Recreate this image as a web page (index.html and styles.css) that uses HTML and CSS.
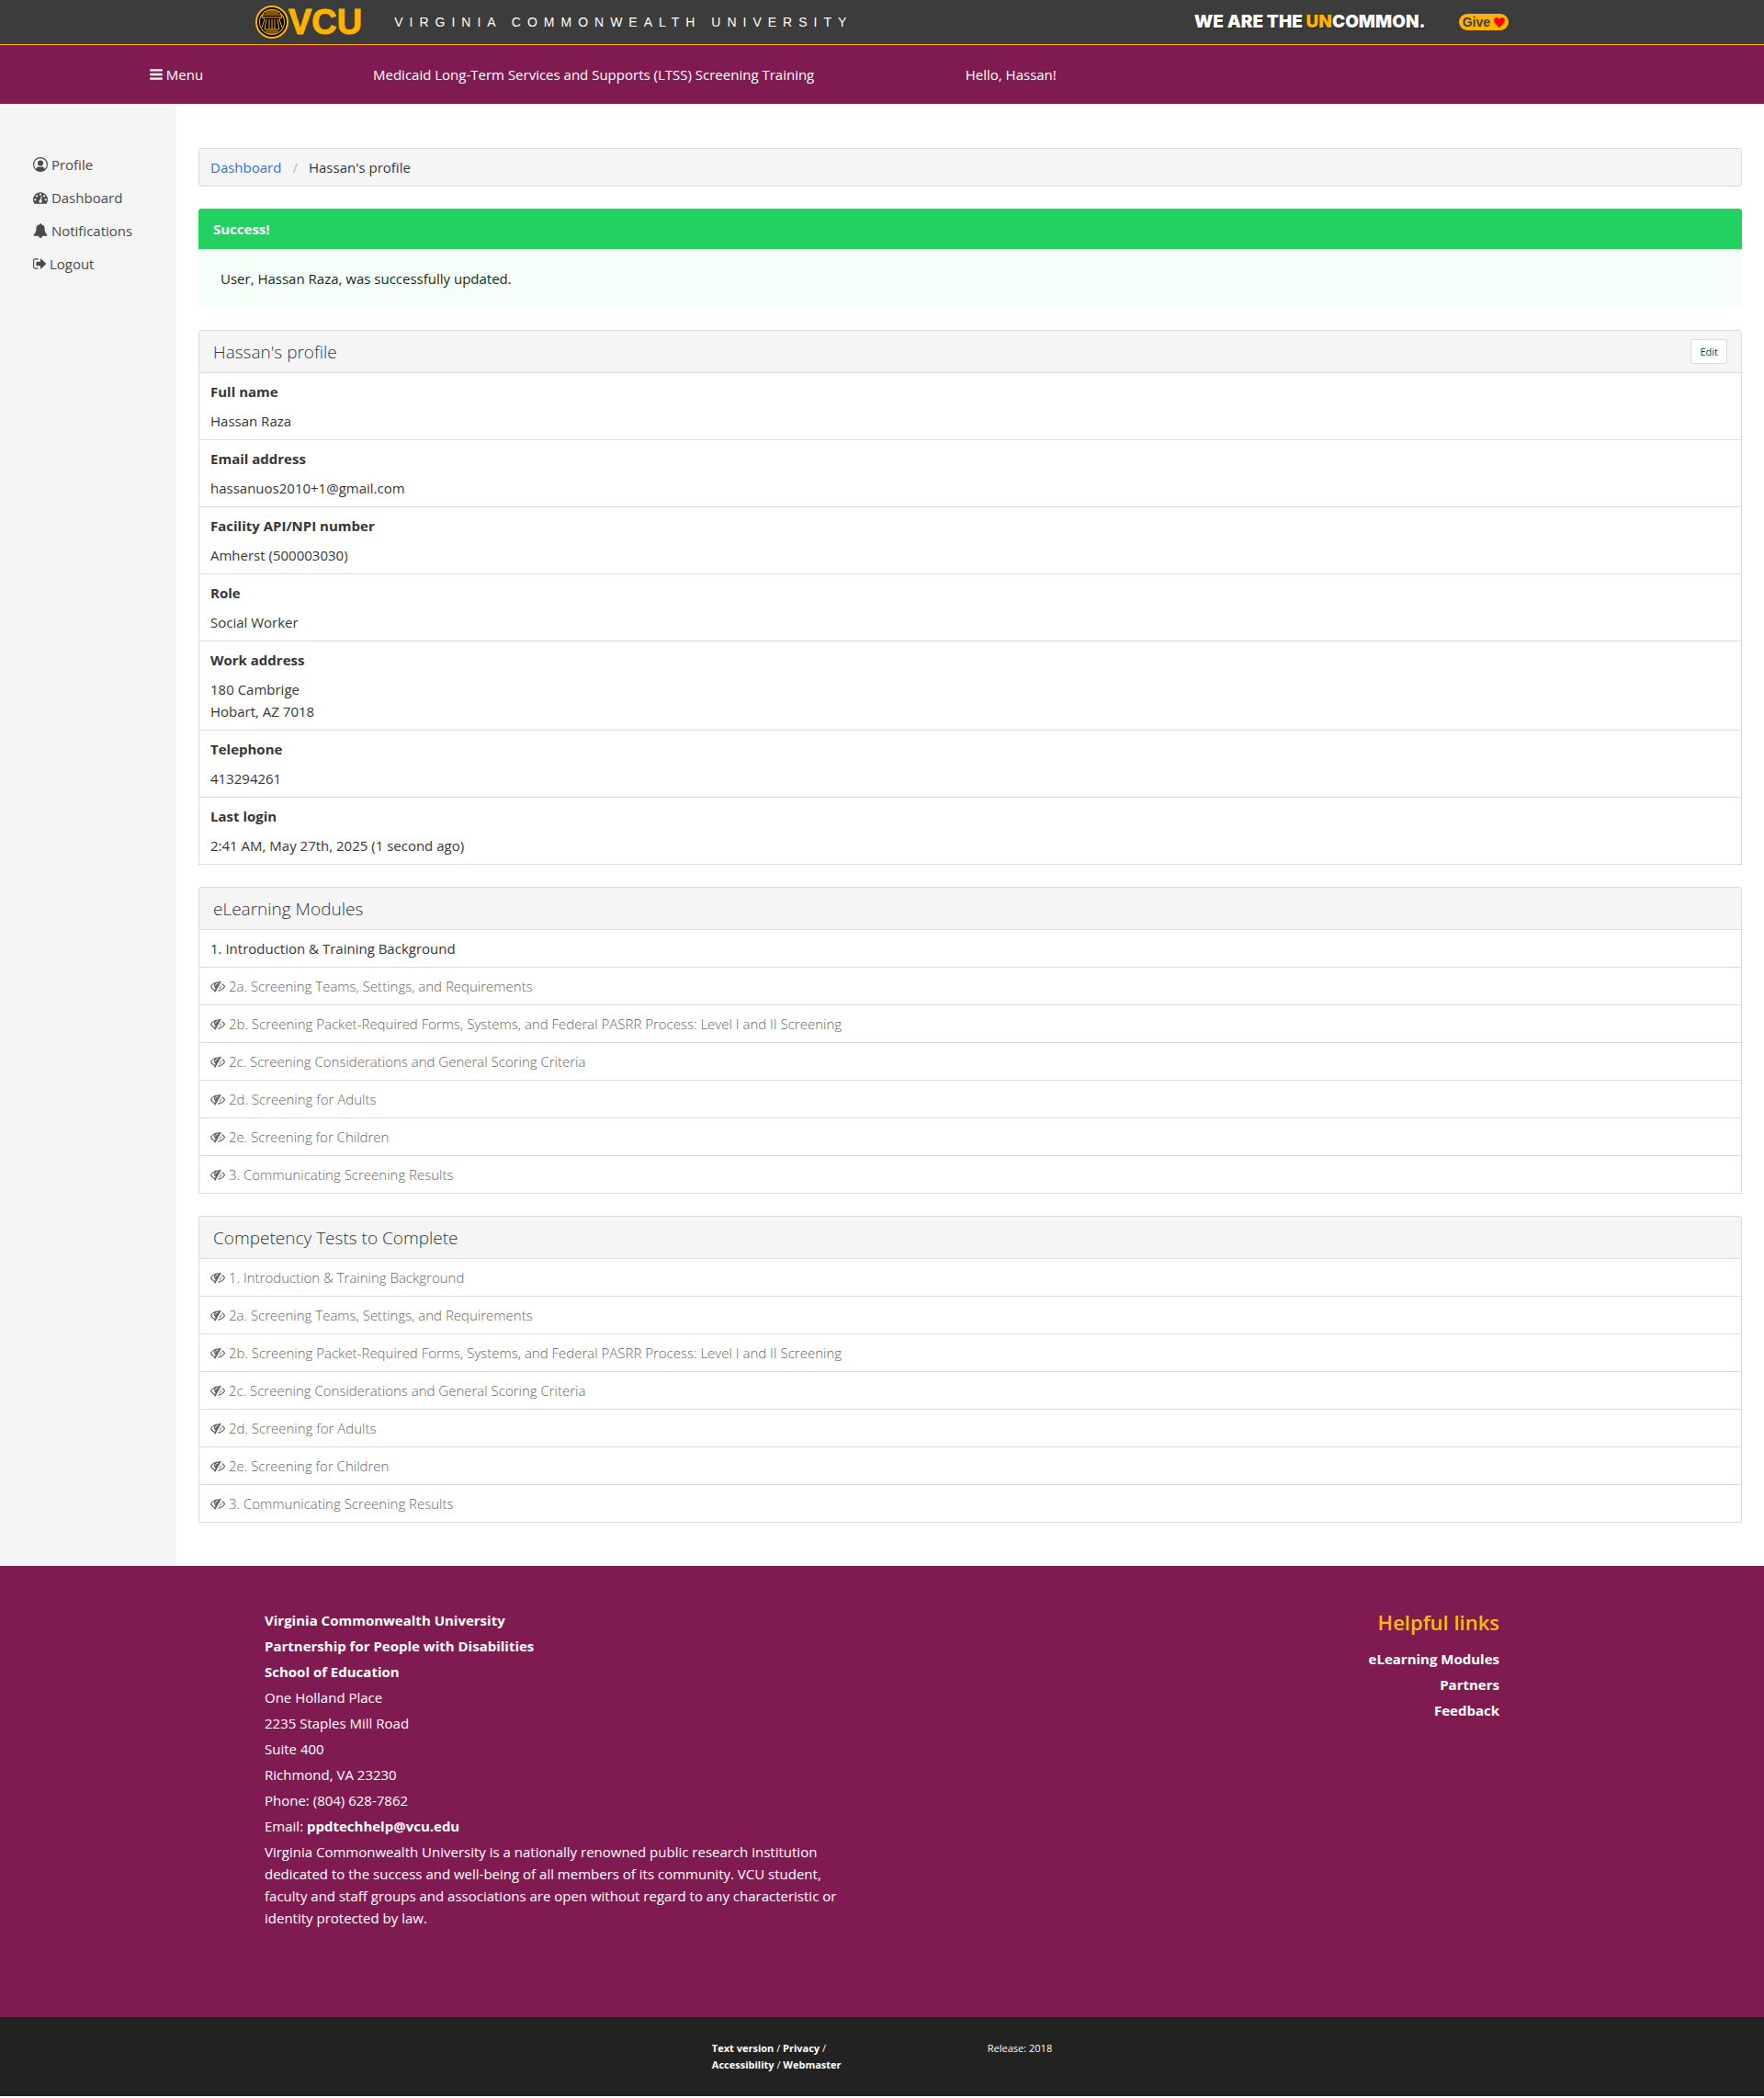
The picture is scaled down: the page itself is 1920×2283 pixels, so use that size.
FILE: index.html
```html
<!DOCTYPE html>
<html lang="en">
<head>
<meta charset="utf-8">
<meta name="viewport" content="width=device-width, initial-scale=1">
<title>Hassan's profile</title>
<link rel="stylesheet" href="styles.css">
</head>
<body>
<svg class="sprite" aria-hidden="true">
  <symbol id="bars" viewBox="128 0 1536 1792"><path d="M1664 1344v128q0 26-19 45t-45 19h-1408q-26 0-45-19t-19-45v-128q0-26 19-45t45-19h1408q26 0 45 19t19 45zm0-512v128q0 26-19 45t-45 19h-1408q-26 0-45-19t-19-45v-128q0-26 19-45t45-19h1408q26 0 45 19t19 45zm0-512v128q0 26-19 45t-45 19h-1408q-26 0-45-19t-19-45v-128q0-26 19-45t45-19h1408q26 0 45 19t19 45z"/></symbol>
  <symbol id="user" viewBox="0 0 1792 1792"><path fill-rule="evenodd" d="M896 0a896 896 0 1 1 0 1792a896 896 0 1 1 0-1792zM1411 1464a768 768 0 1 0-1030 0c50-190 145-310 290-330c60 50 140 82 225 82s165-32 225-82c145 20 240 140 290 330zM896 384a336 352 0 1 1 0 704a336 352 0 1 1 0-704z" transform="rotate(0)"/></symbol>
  <symbol id="gauge" viewBox="0 0 1792 1792"><path d="M384 1152q0-53-37.500-90.500t-90.500-37.500-90.500 37.500-37.500 90.500 37.500 90.500 90.500 37.500 90.500-37.500 37.500-90.500zm192-448q0-53-37.500-90.500t-90.500-37.500-90.500 37.500-37.500 90.500 37.500 90.500 90.500 37.500 90.500-37.500 37.500-90.500zm428 481l101-382q6-26-7.500-48.500t-38.500-29.500-48 6.500-30 39.500l-101 382q-60 5-107 43.500t-63 98.500q-20 77 20 146t117 89 146-20 89-117q16-60-6-117t-72-91zm660-33q0-53-37.500-90.500t-90.500-37.500-90.500 37.500-37.500 90.500 37.500 90.500 90.500 37.500 90.500-37.500 37.500-90.500zm-640-640q0-53-37.500-90.500t-90.500-37.500-90.500 37.500-37.500 90.500 37.500 90.500 90.500 37.500 90.500-37.500 37.500-90.500zm448 192q0-53-37.500-90.500t-90.500-37.500-90.500 37.500-37.500 90.500 37.500 90.500 90.500 37.500 90.500-37.500 37.500-90.500zm320 448q0 261-141 483-19 29-54 29h-1402q-35 0-54-29-141-221-141-483 0-182 71-348t191-286 286-191 348-71 348 71 286 191 191 286 71 348z"/></symbol>
  <symbol id="bell" viewBox="0 0 1792 1792"><path d="M912 1696q0-16-16-16-59 0-101.500-42.500t-42.500-101.500q0-16-16-16t-16 16q0 73 51.500 124.500t124.500 51.500q16 0 16-16zm816-288q0 52-38 90t-90 38h-448q0 106-75 181t-181 75-181-75-75-181h-448q-52 0-90-38t-38-90q50-42 91-88t85-119.500 74.500-158.500 50-206 19.500-260q0-152 117-282.500t307-158.500q-8-19-8-39 0-40 28-68t68-28 68 28 28 68q0 20-8 39 190 28 307 158.500t117 282.500q0 139 19.500 260t50 206 74.500 158.500 85 119.500 91 88z"/></symbol>
  <symbol id="sign-out" viewBox="64 0 1568 1792"><path d="M704 1440q0 4 1 20t.5 26.500-3 23.500-10 19.500-20.500 6.500h-320q-119 0-203.500-84.500t-84.500-203.500v-704q0-119 84.500-203.500t203.500-84.500h320q13 0 22.500 9.500t9.500 22.500q0 4 1 20t.5 26.500-3 23.500-10 19.500-20.500 6.500h-320q-66 0-113 47t-47 113v704q0 66 47 113t113 47h312l11.500 1 11.500 3 8 5.500 7 9 2 13.500zm928-544q0 26-19 45l-544 544q-19 19-45 19t-45-19-19-45v-288h-448q-26 0-45-19t-19-45v-384q0-26 19-45t45-19h448v-288q0-26 19-45t45-19 45 19l544 544q19 19 19 45z"/></symbol>
  <symbol id="eye-slash" viewBox="0 0 1792 1792"><path d="M555 1335l78-141q-87-63-136-159t-49-203q0-121 61-225-229 117-381 353 167 258 427 375zm389-759q0-20-14-34t-34-14q-125 0-214.500 89.500t-89.500 214.500q0 20 14 34t34 14 34-14 14-34q0-86 61-147t147-61q20 0 34-14t14-34zm363-191q0 7-1 9-106 189-316 567t-315 566l-49 89q-10 16-28 16-12 0-134-70-16-10-16-28 0-12 44-87-143-65-263.500-173t-208.500-245q-20-31-20-69t20-69q153-235 380-371t496-136q89 0 180 17l54-97q10-16 28-16 5 0 18 6t31 15.500 33 18.500 31.500 18.500 19.500 11.500q16 10 16 27zm37 447q0 139-79 253.500t-209 164.500l280-502q8 45 8 84zm448 128q0 35-20 69-39 64-109 145-150 172-347.500 267t-419.500 95l74-132q212-18 392.500-137t301.500-307q-115-179-282-294l63-112q95 64 182.500 153t144.500 184q20 34 20 69z"/></symbol>
</svg>

<header class="brandbar">
  <div class="brandbar-inner">
    <a class="logo" href="#" aria-label="VCU home">
      <svg class="seal" viewBox="0 0 36 36" aria-hidden="true">
        <circle cx="18" cy="18" r="18" fill="#ffb300"/>
        <circle cx="18" cy="18" r="16" fill="#000"/>
        <circle cx="18" cy="18" r="14" fill="#ffb300"/>
        <circle cx="18" cy="18" r="13" fill="#000"/>
        <path d="M11 8h14M13 6h10M11 28h14M13 30h10" stroke="#ffb300" stroke-width="1"/>
        <path d="M8 10h20l1 3H7zM8 13l2 2-3 9M12 15l-2 11M15 15v11M18 15v11M21 15v11M24 15l2 11M28 13l-2 2 3 9" fill="none" stroke="#ffb300" stroke-width="1"/>
        <path d="M10 26h16" stroke="#ffb300" stroke-width="1"/>
      </svg>
      <span class="logo-text">VCU</span>
    </a>
    <a class="university" href="#">VIRGINIA COMMONWEALTH UNIVERSITY</a>
    <span class="tagline">WE ARE THE <b>UN</b>COMMON.</span>
    <a class="give" href="#">Give
      <svg class="heart" viewBox="0 0 12 11" aria-hidden="true"><path d="M6 11L1 6C-1 3 .5 0 3 0c1.500 0 2.500.8 3 2 .5-1.200 1.500-2 3-2 2.500 0 4 3 2 6z" fill="#f00"/></svg>
    </a>
  </div>
</header>

<nav class="topnav" aria-label="Main">
  <a href="#"><svg class="icon icon-bars" aria-hidden="true"><use href="#bars"/></svg> Menu</a>
  <a class="course" href="#">Medicaid Long-Term Services and Supports (LTSS) Screening Training</a>
  <span>Hello, Hassan!</span>
</nav>

<div class="layout">
  <aside class="sidebar">
    <ul class="menu">
      <li><a href="#"><svg class="icon" aria-hidden="true"><use href="#user"/></svg> Profile</a></li>
      <li><a href="#"><svg class="icon" aria-hidden="true"><use href="#gauge"/></svg> Dashboard</a></li>
      <li><a href="#"><svg class="icon" aria-hidden="true"><use href="#bell"/></svg> Notifications</a></li>
      <li><a href="#"><svg class="icon icon-out" aria-hidden="true"><use href="#sign-out"/></svg> Logout</a></li>
    </ul>
  </aside>

  <main class="content">
    <nav class="breadcrumb" aria-label="Breadcrumb">
      <a href="#">Dashboard</a><span class="divider">/</span><span>Hassan's profile</span>
    </nav>

    <section class="message" role="status">
      <p class="message-header">Success!</p>
      <p class="message-body">User, Hassan Raza, was successfully updated.</p>
    </section>

    <section class="panel">
      <header class="panel-heading"><h2>Hassan's profile</h2><button class="edit" type="button">Edit</button></header>
      <dl class="details">
        <div><dt>Full name</dt><dd>Hassan Raza</dd></div>
        <div><dt>Email address</dt><dd>hassanuos2010+1@gmail.com</dd></div>
        <div><dt>Facility API/NPI number</dt><dd>Amherst (500003030)</dd></div>
        <div><dt>Role</dt><dd>Social Worker</dd></div>
        <div><dt>Work address</dt><dd>180 Cambrige<br>Hobart, AZ 7018</dd></div>
        <div><dt>Telephone</dt><dd>413294261</dd></div>
        <div><dt>Last login</dt><dd>2:41 AM, May 27th, 2025 (1 second ago)</dd></div>
      </dl>
    </section>

    <section class="panel">
      <header class="panel-heading"><h2>eLearning Modules</h2></header>
      <ul class="modules">
        <li><a href="#">1. Introduction &amp; Training Background</a></li>
        <li class="locked"><svg class="icon" aria-hidden="true"><use href="#eye-slash"/></svg> 2a. Screening Teams, Settings, and Requirements</li>
        <li class="locked"><svg class="icon" aria-hidden="true"><use href="#eye-slash"/></svg> 2b. Screening Packet-Required Forms, Systems, and Federal PASRR Process: Level I and II Screening</li>
        <li class="locked"><svg class="icon" aria-hidden="true"><use href="#eye-slash"/></svg> 2c. Screening Considerations and General Scoring Criteria</li>
        <li class="locked"><svg class="icon" aria-hidden="true"><use href="#eye-slash"/></svg> 2d. Screening for Adults</li>
        <li class="locked"><svg class="icon" aria-hidden="true"><use href="#eye-slash"/></svg> 2e. Screening for Children</li>
        <li class="locked"><svg class="icon" aria-hidden="true"><use href="#eye-slash"/></svg> 3. Communicating Screening Results</li>
      </ul>
    </section>

    <section class="panel">
      <header class="panel-heading"><h2>Competency Tests to Complete</h2></header>
      <ul class="modules">
        <li class="locked"><svg class="icon" aria-hidden="true"><use href="#eye-slash"/></svg> 1. Introduction &amp; Training Background</li>
        <li class="locked"><svg class="icon" aria-hidden="true"><use href="#eye-slash"/></svg> 2a. Screening Teams, Settings, and Requirements</li>
        <li class="locked"><svg class="icon" aria-hidden="true"><use href="#eye-slash"/></svg> 2b. Screening Packet-Required Forms, Systems, and Federal PASRR Process: Level I and II Screening</li>
        <li class="locked"><svg class="icon" aria-hidden="true"><use href="#eye-slash"/></svg> 2c. Screening Considerations and General Scoring Criteria</li>
        <li class="locked"><svg class="icon" aria-hidden="true"><use href="#eye-slash"/></svg> 2d. Screening for Adults</li>
        <li class="locked"><svg class="icon" aria-hidden="true"><use href="#eye-slash"/></svg> 2e. Screening for Children</li>
        <li class="locked"><svg class="icon" aria-hidden="true"><use href="#eye-slash"/></svg> 3. Communicating Screening Results</li>
      </ul>
    </section>
  </main>
</div>

<footer>
  <div class="footer-main">
    <div class="footer-inner">
      <address class="contact">
        <p><a href="#">Virginia Commonwealth University</a></p>
        <p><a href="#">Partnership for People with Disabilities</a></p>
        <p><a href="#">School of Education</a></p>
        <p>One Holland Place</p>
        <p>2235 Staples Mill Road</p>
        <p>Suite 400</p>
        <p>Richmond, VA 23230</p>
        <p>Phone: (804) 628-7862</p>
        <p>Email: <a href="mailto:ppdtechhelp@vcu.edu">ppdtechhelp@vcu.edu</a></p>
        <p>Virginia Commonwealth University is a nationally renowned public research institution dedicated to the success and well-being of all members of its community. VCU student, faculty and staff groups and associations are open without regard to any characteristic or identity protected by law.</p>
      </address>
      <nav class="helpful" aria-label="Helpful links">
        <h2>Helpful links</h2>
        <a href="#">eLearning Modules</a>
        <a href="#">Partners</a>
        <a href="#">Feedback</a>
      </nav>
    </div>
  </div>
  <div class="footer-base">
    <p class="legal"><a href="#">Text version</a> / <a href="#">Privacy</a> / <a href="#">Accessibility</a> / <a href="#">Webmaster</a></p>
    <p>Release: 2018</p>
  </div>
</footer>
</body>
</html>
```
FILE: styles.css
```css
* { box-sizing: border-box; }

body, p, ul, dl, dd, h2 { margin: 0; padding: 0; }

body {
  background: #fff;
  color: #363636;
  font: 15px/24px "Open Sans", "Noto Sans", sans-serif;
}

ul { list-style: none; }
a { color: inherit; text-decoration: none; }

.sprite { display: none; }

.icon {
  display: inline-block;
  width: 16px;
  height: 16px;
  fill: currentColor;
  vertical-align: -2px;
}
.icon-bars, .icon-out { width: 14px; }

/* University brand bar */
.brandbar {
  background: #3c3c3c;
  border-bottom: 1px solid #ffb300;
}
.brandbar-inner {
  display: flex;
  align-items: center;
  max-width: 1364px;
  height: 48px;
  margin: 0 auto;
  color: #fff;
}
.logo { display: flex; align-items: center; }
.seal { width: 36px; height: 36px; }
.logo-text {
  color: #ffb300;
  font: bold 38px/48px "Liberation Sans", Arial, sans-serif;
  -webkit-text-stroke: 1px #ffb300;
}
.university {
  margin-left: 35px;
  font: 14px/24px "Liberation Sans", Arial, sans-serif;
  letter-spacing: 7px;
}
.tagline {
  margin-left: auto;
  font: 900 19px/24px Inter, sans-serif;
  text-shadow: 1px 1px 1px #222;
}
.tagline b { color: #ffb300; font-weight: 900; }
.give {
  display: flex;
  align-items: center;
  gap: 4px;
  margin-left: 36px;
  padding: 0 4px;
  border-radius: 9px;
  background: #ffb300;
  color: #3c3c3c;
  font: bold 14px/18px "Liberation Sans", Arial, sans-serif;
}
.heart { width: 12px; height: 11px; }

/* Main navigation */
.topnav {
  display: grid;
  grid-template-columns: 20% auto 20% 1fr;
  justify-items: center;
  padding: 20px 0;
  background: #801b51;
  color: #fff;
}
.course { padding: 0 22px; }

.layout { display: flex; }

.sidebar {
  flex: 0 0 10%;
  padding: 48px 0 48px 24px;
  background: #f5f5f5;
  color: #4a4a4a;
}
.menu a {
  display: block;
  padding: 8px 12px;
  line-height: 20px;
}

.content {
  flex: 1;
  display: flex;
  flex-direction: column;
  gap: 24px;
  padding: 48px 24px 47px;
}

.breadcrumb {
  display: flex;
  padding: 8px 12px;
  border: 1px solid #dbdbdb;
  border-radius: 3px;
  background: #f5f5f5;
}
.breadcrumb a { color: #3273dc; }
.divider { padding: 0 12px; color: #b5b5b5; }

.message { border-radius: 3px; overflow: hidden; }
.message-header {
  padding: 10px 16px;
  background: #23d160;
  color: #fff;
  font-weight: 700;
}
.message-body {
  padding: 20px 24px;
  background: #f6fef9;
  color: #0e301a;
}

.panel-heading {
  display: flex;
  align-items: center;
  justify-content: space-between;
  height: 47px;
  padding: 0 15px;
  border: 1px solid #dbdbdb;
  border-radius: 3px 3px 0 0;
  background: #f5f5f5;
}
.panel-heading h2 { font-size: 19px; font-weight: 300; }
.edit {
  height: 27px;
  padding: 0 9px;
  border: 1px solid #dbdbdb;
  border-radius: 2px;
  background: #fff;
  color: #363636;
  font: 400 11px/18px "Open Sans", "Noto Sans", sans-serif;
}

.details > div, .modules > li {
  padding: 8px 12px;
  border: 1px solid #dbdbdb;
  border-top: 0;
}
.details dt { margin-bottom: 8px; font-weight: 700; }
.locked { color: #666; font-weight: 300; }

/* Footer */
.footer-main {
  padding: 47px 24px 96px;
  background: #801b51;
  color: #fff;
}
.footer-main a { font-weight: 700; }
.footer-inner {
  display: grid;
  grid-template-columns: 1fr 1fr;
  gap: 48px;
  max-width: 1344px;
  margin: 0 auto;
}
.contact {
  display: grid;
  gap: 4px;
  font-style: normal;
}
.helpful {
  display: flex;
  flex-direction: column;
  align-items: flex-end;
  gap: 4px;
}
.helpful h2 {
  margin-bottom: 10px;
  color: #fdb913;
  font-size: 22px;
  font-weight: 600;
  line-height: 28px;
}
.footer-base {
  display: flex;
  justify-content: center;
  gap: 150px;
  padding: 25px 24px;
  background: #222;
  color: #fff;
  font-size: 11px;
  line-height: 18px;
}
.legal { width: 150px; }
.legal a { font-weight: 700; }
```
